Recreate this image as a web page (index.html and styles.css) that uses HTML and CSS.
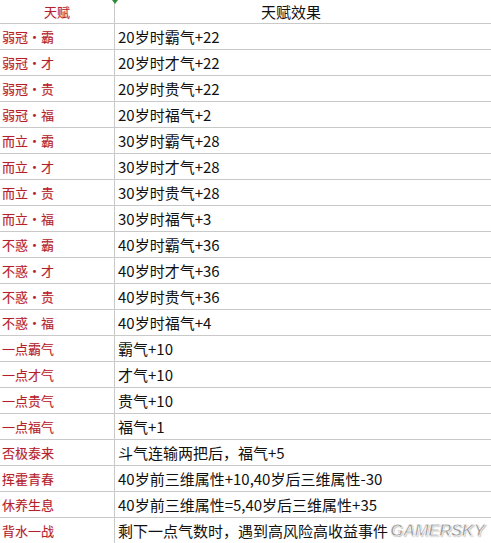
FILE: index.html
```html
<!DOCTYPE html>
<html>
<head>
<meta charset="utf-8">
<link rel="stylesheet" href="styles.css">
</head>
<body>
<div class="sheet">
  <div class="row head">
    <div class="c1">天赋</div>
    <div class="c2">天赋效果</div>
  </div>
  <div class="row"><div class="c1">弱冠・霸</div><div class="c2">20岁时霸气+22</div></div>
  <div class="row"><div class="c1">弱冠・才</div><div class="c2">20岁时才气+22</div></div>
  <div class="row"><div class="c1">弱冠・贵</div><div class="c2">20岁时贵气+22</div></div>
  <div class="row"><div class="c1">弱冠・福</div><div class="c2">20岁时福气+2</div></div>
  <div class="row"><div class="c1">而立・霸</div><div class="c2">30岁时霸气+28</div></div>
  <div class="row"><div class="c1">而立・才</div><div class="c2">30岁时才气+28</div></div>
  <div class="row"><div class="c1">而立・贵</div><div class="c2">30岁时贵气+28</div></div>
  <div class="row"><div class="c1">而立・福</div><div class="c2">30岁时福气+3</div></div>
  <div class="row"><div class="c1">不惑・霸</div><div class="c2">40岁时霸气+36</div></div>
  <div class="row"><div class="c1">不惑・才</div><div class="c2">40岁时才气+36</div></div>
  <div class="row"><div class="c1">不惑・贵</div><div class="c2">40岁时贵气+36</div></div>
  <div class="row"><div class="c1">不惑・福</div><div class="c2">40岁时福气+4</div></div>
  <div class="row"><div class="c1">一点霸气</div><div class="c2">霸气+10</div></div>
  <div class="row"><div class="c1">一点才气</div><div class="c2">才气+10</div></div>
  <div class="row"><div class="c1">一点贵气</div><div class="c2">贵气+10</div></div>
  <div class="row"><div class="c1">一点福气</div><div class="c2">福气+1</div></div>
  <div class="row"><div class="c1">否极泰来</div><div class="c2">斗气连输两把后，福气+5</div></div>
  <div class="row"><div class="c1">挥霍青春</div><div class="c2">40岁前三维属性+10,40岁后三维属性-30</div></div>
  <div class="row"><div class="c1">休养生息</div><div class="c2">40岁前三维属性=5,40岁后三维属性+35</div></div>
  <div class="row last"><div class="c1">背水一战</div><div class="c2">剩下一点气数时，遇到高风险高收益事件</div><div class="watermark">GAMERSKY</div></div>
  <div class="mark"></div>
</div>
</body>
</html>
```
FILE: styles.css
```css
html, body {
  margin: 0;
  padding: 0;
  background: #ffffff;
}
.sheet {
  position: relative;
  width: 491px;
  height: 543px;
  overflow: hidden;
  font-family: "Noto Sans CJK SC", "DejaVu Sans", sans-serif;
}
.row {
  display: flex;
  height: 25px;
  border-bottom: 1px solid #c9c9c9;
}
.row.head {
  height: 23px;
}
.c1 {
  width: 112px;
  flex: 0 0 112px;
  padding-left: 2px;
  border-right: 1px solid #c9c9c9;
  color: #b3222c;
  font-size: 13px;
  display: flex;
  align-items: center;
  white-space: nowrap;
  text-shadow: 0 0 1px rgba(220, 80, 90, 0.35);
}
.c2 {
  flex: 1;
  padding-left: 3px;
  color: #111111;
  font-size: 15px;
  display: flex;
  align-items: center;
  white-space: nowrap;
  overflow: hidden;
}
.last .c2 {
  flex: 0 0 271px;
}
.head .c1 {
  justify-content: center;
  padding-left: 0;
  flex-basis: 114px;
  width: 114px;
}
.head .c2 {
  justify-content: center;
  padding-left: 0;
  padding-right: 24px;
}
.mark {
  position: absolute;
  left: 112px;
  top: 0;
  width: 0;
  height: 0;
  border-left: 3px solid transparent;
  border-right: 3px solid transparent;
  border-top: 4px solid #2e8b3a;
}
.watermark {
  align-self: center;
  flex: 0 0 auto;
  margin-left: 1px;
  font-family: "Liberation Sans", sans-serif;
  font-weight: bold;
  font-style: italic;
  font-size: 17px;
  line-height: 19px;
  letter-spacing: -0.5px;
  white-space: nowrap;
  color: rgba(140, 140, 140, 0.8);
  -webkit-text-stroke: 0.8px rgba(255, 255, 255, 0.95);
  text-shadow: 1px 1px 1px rgba(120, 120, 120, 0.5);
}
```
